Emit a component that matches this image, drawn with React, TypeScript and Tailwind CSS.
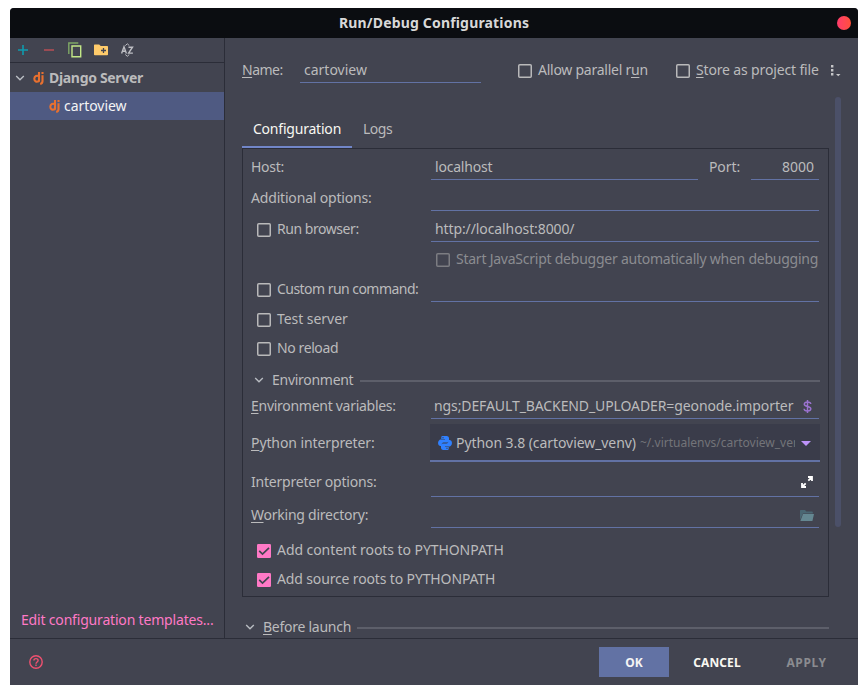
import type { ReactNode } from "react";

function Checkbox({ checked = false, dim = false }: { checked?: boolean; dim?: boolean }) {
  if (checked) {
    return (
      <svg className="mt-[2px] size-[14px] shrink-0" viewBox="0 0 14 14">
        <rect width="14" height="14" rx="1.2" fill="#ff79c6" />
        <path d="M2.2 6.8 5.5 10 12 3.8" fill="none" stroke="#424450" strokeWidth="1.7" />
      </svg>
    );
  }
  return (
    <svg
      className={`mt-[2px] size-[14px] shrink-0 ${dim ? "text-[#7c7d82]" : "text-[#b9b9ba]"}`}
      viewBox="0 0 14 14"
      fill="none"
      stroke="currentColor"
    >
      <rect x=".75" y=".75" width="12.5" height="12.5" rx="1" strokeWidth="1.5" />
    </svg>
  );
}

function Row({ h, children }: { h: string; children?: ReactNode }) {
  return <div className={`flex pl-2 pr-[9px] ${h}`}>{children}</div>;
}

function Label({ children, className = "pt-[5px]" }: { children: ReactNode; className?: string }) {
  return (
    <div className={`flex w-[180px] shrink-0 items-center whitespace-nowrap ${className}`}>
      {children}
    </div>
  );
}

function Field({ children, className = "pt-[6px]" }: { children?: ReactNode; className?: string }) {
  return (
    <div className={`flex items-center whitespace-nowrap border-b border-[#6272a4] pl-1 ${className}`}>
      {children}
    </div>
  );
}

function Key({ children }: { children: string }) {
  return <span className="underline decoration-1 underline-offset-[2px]">{children}</span>;
}

function Chevron({ className }: { className: string }) {
  return (
    <svg className={className} viewBox="0 0 10 10" fill="none" stroke="#b8bcc2" strokeWidth="1.4">
      <path d="M1.2 3 5 6.8 8.8 3" />
    </svg>
  );
}

function Dj() {
  return (
    <svg className="h-[14px] w-[11px] shrink-0" viewBox="0 0 11 14" fill="none" stroke="#e8702f" strokeWidth="2.1">
      <path d="M6 1v9.7M6 5.2C4 4.3 1.3 4.8 1.3 7.8s2.3 3.2 4.7 2.5" />
      <path d="M9.500 4.200v6c0 1.700-.7 2.300-2.300 2.700M9.500 1v1.900" />
    </svg>
  );
}

function Toolbar() {
  return (
    <div className="flex h-[25px] items-center border-b border-[#2b2d38] pl-2">
      <svg className="size-[10px]" viewBox="0 0 10 10" stroke="#0f9bae" strokeWidth="1.6">
        <path d="M0 5h10M5 0v10" />
      </svg>
      <svg className="ml-4 h-[10px] w-[10px]" viewBox="0 0 10 10" stroke="#b94e55" strokeWidth="1.7">
        <path d="M0 5h10" />
      </svg>
      <svg className="ml-[14px] h-[16px] w-[14px]" viewBox="0 0 14 16" fill="none" strokeWidth="1.4">
        <path d="M.8 12V1h9.500" stroke="#7fa865" />
        <path d="M4 4h8.700v10.700H4z" stroke="#c3e887" />
      </svg>
      <svg className="ml-3 h-[12px] w-[14px]" viewBox="0 0 14 12">
        <path d="M0 1.200Q0 .5.700.5h4.500l1.500 1.500h6.500q.8 0 .8.800v7.700q0 .8-.8.800H.8q-.8 0-.8-.8z" fill="#ffcb6b" />
        <path d="M9.500 4v5M7 6.500h5" stroke="#424450" strokeWidth="1.3" />
      </svg>
      <svg className="ml-[13px] h-[14px] w-[13px]" viewBox="0 0 13 14" fill="none" stroke="#bdbec3" strokeWidth="1.400">
        <path d="M.6 10.500 3 3.800l2.400 6.700M1.400 8.300h3.200M7.500 4.200h4L7.600 10.100h4.300" />
        <path d="M4.300 2.600 6.300.8l2 1.800M4.300 11.500l2 1.800 2-1.800" strokeWidth="1" />
      </svg>
    </div>
  );
}

function Sidebar() {
  return (
    <div className="flex w-[215px] shrink-0 flex-col border-r border-[#2b2d38]">
      <Toolbar />
      <div className="flex h-[29px] items-center pl-[5px] font-bold tracking-[-0.32px]">
        <Chevron className="mr-[8px] size-[10px]" />
        <Dj />
        <span className="ml-[5px]">Django Server</span>
      </div>
      <div className="flex h-7 items-center bg-[#4f5a82] pl-[39px] text-[#f4f4f5]">
        <Dj />
        <span className="ml-1 tracking-[-0.05px]">cartoview</span>
      </div>
      <div className="mt-auto flex h-[37px] items-center whitespace-nowrap pl-[11px] tracking-[-0.18px] text-[#ff79c6]">
        Edit configuration templates...
      </div>
    </div>
  );
}

function ConfigPanel() {
  return (
    <div className="h-[449px] w-[587px] shrink-0 border border-[#2b2d38]">
      <Row h="h-[31px]">
        <Label className="pt-[5px] tracking-[-0.3px]">Host:</Label>
        <Field className="w-[267px] pt-[6px] tracking-[-0.2px]">localhost</Field>
        <div className="ml-[11px] flex w-[42px] items-center pt-[5px] tracking-[-0.1px]">Port:</div>
        <Field className="w-[68px] justify-end pr-[5px] pt-[6px]">8000</Field>
      </Row>
      <Row h="h-[31px]">
        <Label className="pt-[5px] tracking-[-0.18px]">Additional options:</Label>
        <Field className="flex-1" />
      </Row>
      <Row h="h-[31px]">
        <Label className="gap-1.5 pl-[6px] pt-[5px] tracking-[-0.45px]"><Checkbox />Run browser:</Label>
        <Field className="flex-1 pt-[6px] tracking-[-0.1px]">http://localhost:8000/</Field>
      </Row>
      <Row h="h-[29px]">
        <div className="ml-[185px] flex items-center gap-1.5 whitespace-nowrap pt-[5px] tracking-[-0.24px] text-[#8b8c90]">
          <Checkbox dim />Start JavaScript debugger automatically when debugging
        </div>
      </Row>
      <Row h="h-[31px]">
        <Label className="gap-1.5 pl-[6px] pt-[5px] tracking-[-0.54px]"><Checkbox />Custom run command:</Label>
        <Field className="flex-1" />
      </Row>
      <Row h="h-[29px]">
        <Label className="gap-1.5 pl-[6px] pt-[5px] tracking-[-0.05px]"><Checkbox />Test server</Label>
      </Row>
      <Row h="h-[29px]">
        <Label className="gap-1.5 pl-[6px] pt-[5px] tracking-[-0.4px]"><Checkbox />No reload</Label>
      </Row>
      <Row h="h-[35px]">
        <div className="mr-[-1px] flex flex-1 items-center pl-[3px] pt-[5px] tracking-[-0.28px]">
          <Chevron className="mr-2 size-[10px]" />
          Environment
          <span className="ml-[7px] mt-[2px] h-[2px] flex-1 bg-[#5d5f6a]" />
        </div>
      </Row>
      <Row h="h-[24px]">
        <Label className="pb-[2px] tracking-[-0.28px]"><span><Key>E</Key>nvironment variables:</span></Label>
        <Field className="flex-1 pb-[2px]">
          <span className="-ml-px w-[361px] tracking-[-0.1px]">ngs;DEFAULT_BACKEND_UPLOADER=geonode.importer</span>
          <svg className="ml-[8px] mt-px h-[13px] w-[9px] shrink-0" viewBox="0 0 9 13" fill="none" stroke="#9a72cf" strokeWidth="1.5">
            <path d="M4.500 0v13M7.800 4C7.600 2.500 6.500 2 4.500 2S1.300 2.700 1.300 4.200c0 3.200 6.500 1.300 6.500 4.500 0 1.500-1.200 2.300-3.300 2.300S1.200 10.200 1.100 8.800" />
          </svg>
        </Field>
      </Row>
      <Row h="h-[43px]">
        <Label className="pt-[5px] tracking-[-0.1px]"><span><Key>P</Key>ython interpreter:</span></Label>
        <div className="mt-[5px] -ml-px -mr-px flex flex-1 items-center whitespace-nowrap border-b-2 border-[#6272a4] bg-[#3a3c4a] pl-2">
          <svg className="mt-[2px] size-[14px] shrink-0" viewBox="0 0 14 14" fill="#2f80ff">
            <path d="M4 0h5q2 .3 2 2v3q0 1.500-1.500 1.500h-4Q3.500 6.700 3.300 10H2Q0 9.500 0 7t2-3.500h5V3H3.300V1.500Q3.300.4 4 0z" />
            <path d="M10 14H5q-2-.3-2-2V9q0-1.500 1.500-1.500h4Q10.500 7.300 10.700 4H12q2 .5 2 3t-2 3.500H7v.5h3.700v1.500q0 1.100-.7 1.500z" />
            <circle cx="5" cy="1.700" r=".7" fill="#424450" />
            <circle cx="9" cy="12.300" r=".7" fill="#424450" />
          </svg>
          <span className="ml-1 w-[184px] pt-[2px] tracking-[-0.07px]">Python 3.8 (cartoview_venv)</span>
          <span className="w-[155px] overflow-hidden pt-[2px] text-[12px] text-[#737479]">~/.virtualenvs/cartoview_venv</span>
          <span className="ml-[6px] mt-[3px] h-0 w-0 border-x-[5px] border-t-[5px] border-x-transparent border-t-[#bd93f9]" />
        </div>
      </Row>
      <Row h="h-[35px]">
        <Label className="pt-[5px] tracking-[-0.22px]">Interpreter options:</Label>
        <Field className="flex-1 justify-end pr-[6px] pt-[6px]">
          <svg className="size-[12px]" viewBox="0 0 12 12" fill="none" stroke="#fff" strokeWidth="1.8">
            <path d="M7 1h4v4M11 1 7.300 4.700M1 7v4h4M1 11l3.700-3.700" />
          </svg>
        </Field>
      </Row>
      <Row h="h-[31px]">
        <Label className="pt-[5px] tracking-[-0.24px]"><span><Key>W</Key>orking directory:</span></Label>
        <Field className="flex-1 justify-end pr-[5px] pt-[6px]">
          <svg className="h-[11px] w-[14px]" viewBox="0 0 14 11">
            <path d="M0 10V.7Q0 0 .7 0H5l1.300 1.500H12q.8 0 .8.800V3.500H3L0 10z" fill="#4a6773" />
            <path d="M3 4h11l-1.600 7H.4z" fill="#648791" />
          </svg>
        </Field>
      </Row>
      <div className="h-[5px]" />
      <Row h="h-[29px]">
        <Label className="gap-1.5 pl-[6px] pt-[5px] tracking-[-0.07px]"><Checkbox checked />Add content roots to PYTHONPATH</Label>
      </Row>
      <Row h="h-[29px]">
        <Label className="gap-1.5 pl-[6px] pt-[5px] tracking-[-0.14px]"><Checkbox checked />Add source roots to PYTHONPATH</Label>
      </Row>
    </div>
  );
}

function Editor() {
  return (
    <div className="flex flex-1">
      <div className="flex w-[610px] shrink-0 flex-col pl-[17px]">
        <div className="flex h-[45px] shrink-0 items-end whitespace-nowrap">
          <span className="mb-[3px] w-[58px] shrink-0 tracking-[-0.5px]"><Key>N</Key>ame:</span>
          <div className="h-[25px] w-[181px] shrink-0 border-b border-[#6272a4] pl-1 pt-[2px]">cartoview</div>
          <div className="mb-[3px] ml-[37px] flex w-[158px] shrink-0 items-center gap-1.5 tracking-[-0.25px]"><Checkbox /><span>Allow parallel r<Key>u</Key>n</span></div>
          <div className="mb-[3px] flex shrink-0 items-center gap-1.5 tracking-[-0.15px]"><Checkbox /><span><Key>S</Key>tore as project file</span></div>
          <svg className="mb-[6px] ml-[12px] h-[13px] w-[10px] shrink-0" viewBox="0 0 10 13" fill="#c6c6c8">
            <path d="M0 1h2.400v2.400H0zM0 5h2.400v2.400H0zM0 9h2.400v2.400H0zM5 10h4.500L7.250 12.300z" />
          </svg>
        </div>
        <div className="mt-[26px] flex h-[39px] shrink-0">
          <div className="flex w-[110px] items-center justify-center border-b-2 border-[#7186c8] pt-[3px] tracking-[-0.2px] text-[#f8f8f2]">Configuration</div>
          <div className="flex items-center pl-[11px] pt-px tracking-[-0.5px]">Logs</div>
        </div>
        <ConfigPanel />
        <div className="mt-[19px] flex h-[22px] w-[587px] shrink-0 items-center pl-[3px] tracking-[-0.26px]">
          <Chevron className="mr-2 size-[10px]" />
          <span><Key>B</Key>efore launch</span>
          <span className="ml-1.5 mt-[2px] h-[2px] flex-1 bg-[#5d5f6a]" />
        </div>
      </div>
      <div className="mt-[59px] h-[430px] w-[6px] rounded-full bg-[#4b5068]" />
    </div>
  );
}

export default function App() {
  return (
    <div className="h-[695px] w-[868px] bg-white px-[10px] pt-2 font-['Noto_Sans','Open_Sans',sans-serif] text-[14px] leading-[20px] text-[#bbbbbc]">
      <div className="flex h-[677px] w-[848px] flex-col overflow-hidden rounded-t-[4px] bg-[#424450]">
        <div className="flex h-[30px] shrink-0 items-center justify-end bg-[#0b0d11] pr-[7px]">
          <span className="flex-1 pl-[21px] text-center font-bold tracking-[0.17px] text-[#d8d8d8]">Run/Debug Configurations</span>
          <span className="size-[14px] rounded-full bg-gradient-to-r from-[#ff3b6b] to-[#ff5038]" />
        </div>
        <div className="flex h-[600px] shrink-0">
          <Sidebar />
          <Editor />
        </div>
        <div className="flex h-[47px] shrink-0 items-center border-t border-[#2b2d38] pl-[19px] text-[12px] font-bold">
          <svg className="size-[14px]" viewBox="0 0 14 14" fill="none" stroke="#ef5170" strokeWidth="1.400">
            <circle cx="7" cy="7" r="6.200" />
            <path d="M4.900 5.600c0-1.300.9-2 2.100-2s2.100.8 2.100 1.800C9.100 6.900 7 7 7 8.700M7 9.600v1.300" />
          </svg>
          <div className="ml-auto flex h-[30px] w-[70px] items-center justify-center bg-[#6272a4] pt-[2px] text-[#f4f4f4]">OK</div>
          <div className="flex w-[96px] justify-center pt-[2px] tracking-[0.1px] text-[#f8f8f2]">CANCEL</div>
          <div className="mr-[10px] flex w-[83px] justify-center pt-[2px] tracking-[0.6px] text-[#8b8c90]">APPLY</div>
        </div>
      </div>
    </div>
  );
}
